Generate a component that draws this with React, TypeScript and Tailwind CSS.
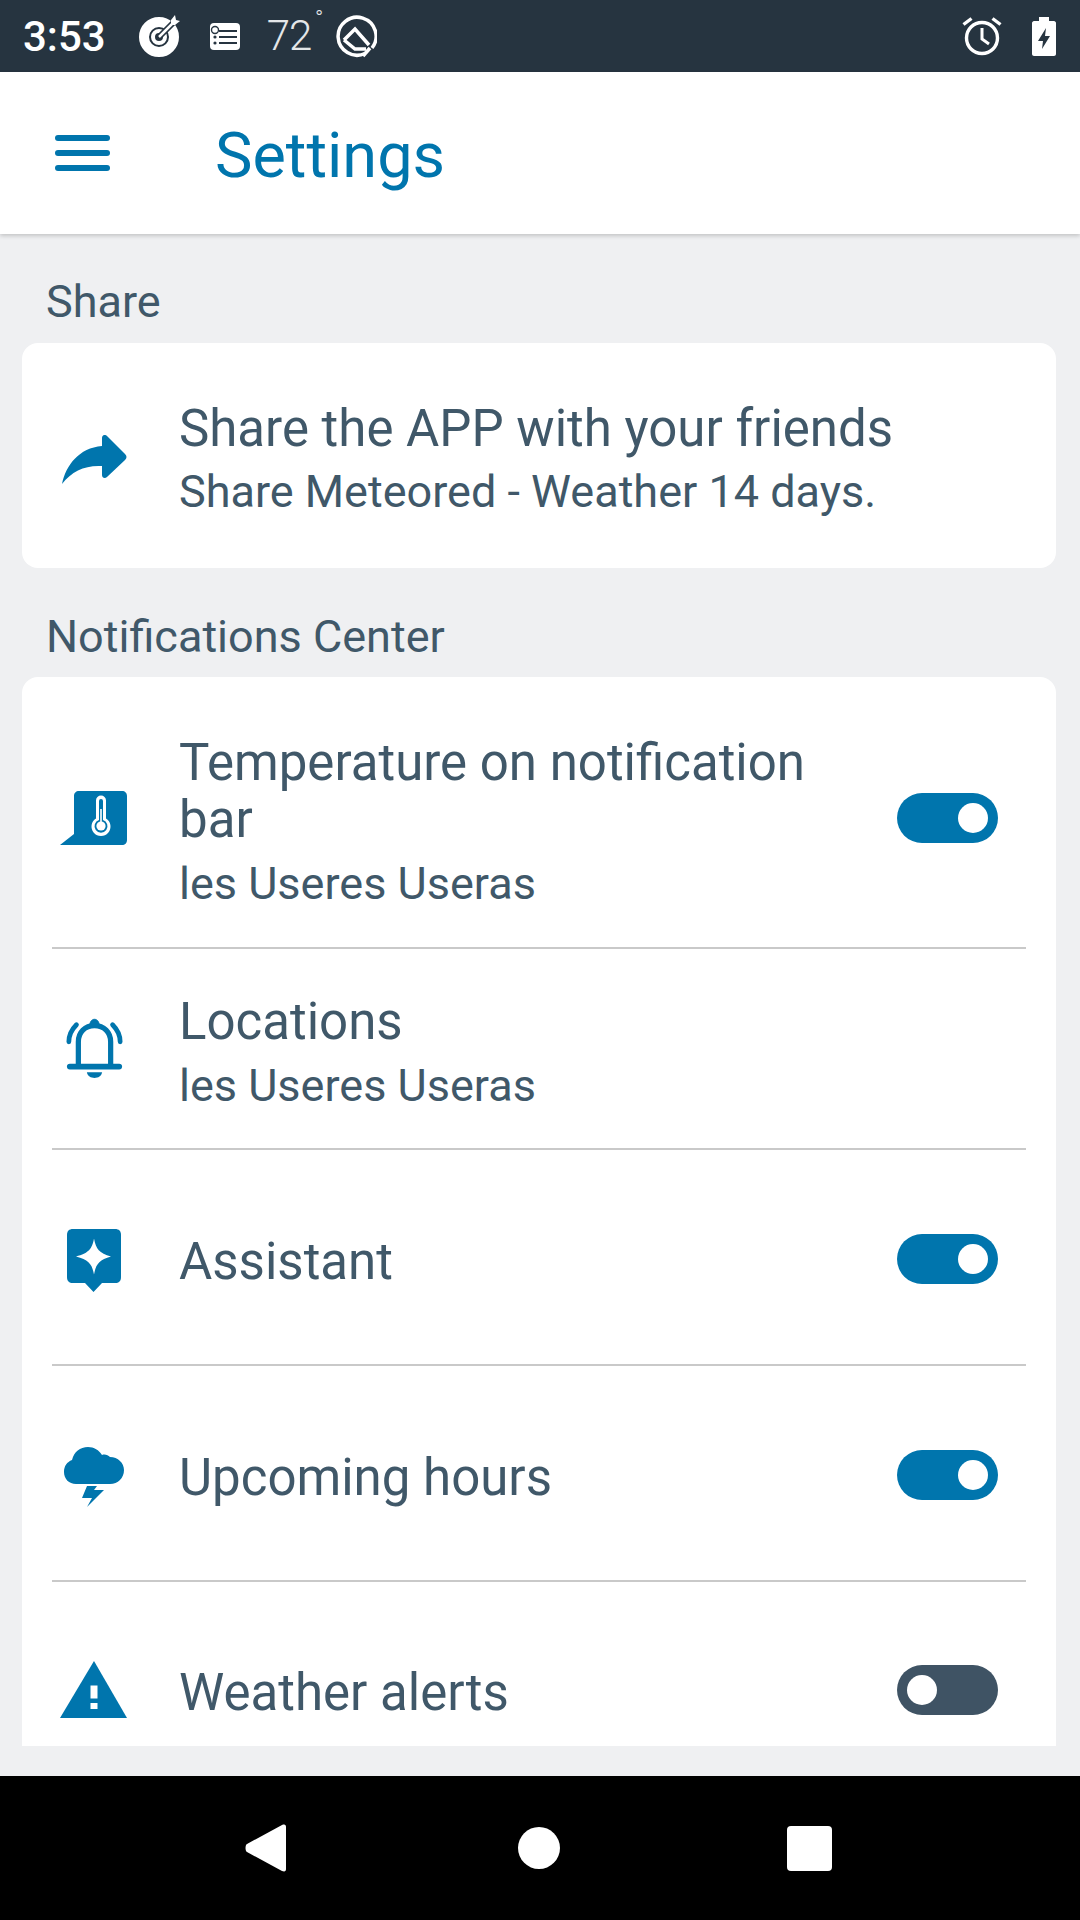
const blue = '#0075ad';

function Toggle({ on }: { on: boolean }) {
  return (
    <div className={`flex h-[50px] w-[101px] shrink-0 items-center rounded-full px-[10px] ${on ? 'justify-end bg-[#0075ad]' : 'justify-start bg-[#3f5364]'}`}>
      <div className="h-[30px] w-[30px] rounded-full bg-white" />
    </div>
  );
}

function ShareIcon() {
  return (
    <svg width="66" height="50" viewBox="0 0 66 50" fill={blue}>
      <path d="M1 49C5 30 18 13 41 11V3C41 0 44 -1 46 1L64 19C66 21 66 23 64 25L46 42C44 44 41 43 41 40V31C24 30 11 36 1 49Z" />
    </svg>
  );
}

function ThermoIcon() {
  return (
    <svg width="68" height="54" viewBox="0 0 68 54">
      <path d="M14 5C14 2 16 0 19 0H62C65 0 67 2 67 5V49C67 52 65 54 62 54H0L14 43Z" fill={blue} />
      <path d="M36 9.5A5 5 0 0 1 46 9.5V27.5A9.5 9.5 0 1 1 36 27.5Z" fill="#fff" />
      <path d="M39 10A2 2 0 0 1 43 10V29A6.5 6.5 0 1 1 39 29Z" fill={blue} />
      <path d="M40.2 18H41.8V32H40.2Z" fill="#fff" />
      <circle cx="41" cy="35" r="4.6" fill="#fff" />
    </svg>
  );
}

function BellIcon() {
  return (
    <svg width="57" height="63" viewBox="0 0 60 64" fill="none">
      <path d="M13 51V25C13 15 20 8 30 8C40 8 47 15 47 25V51" stroke={blue} strokeWidth="5.5" />
      <path d="M4 51H56" stroke={blue} strokeWidth="6" strokeLinecap="round" />
      <path d="M25 8C25 -1 35 -1 35 8Z" fill={blue} stroke={blue} strokeWidth="1" />
      <path d="M22 57H38C37 65 23 65 22 57Z" fill={blue} />
      <path d="M3 25C3 17 6 12 11 7" stroke={blue} strokeWidth="5" strokeLinecap="round" />
      <path d="M57 25C57 17 54 12 49 7" stroke={blue} strokeWidth="5" strokeLinecap="round" />
    </svg>
  );
}

function AssistantIcon() {
  return (
    <svg width="56" height="64" viewBox="0 0 56 64">
      <path d="M7 0H49C53 0 55 2 55 6V48C55 52 53 54 49 54H36L27.5 63L19 54H7C3 54 1 52 1 48V6C1 2 3 0 7 0Z" fill={blue} />
      <path d="M28 9.5C30 20 33 24 45 27.5C33 31 30 35 28 45.5C26 35 23 31 10 27.5C23 24 26 20 28 9.5Z" fill="#fff" />
    </svg>
  );
}

function StormIcon() {
  return (
    <svg width="62" height="62" viewBox="0 0 62 62" fill={blue}>
      <path d="M13 38C6 38 1 33 1 26C1 20 4 16 9 14C11 6 17 1 25 1C31 1 36 4 39 9C42 8 45 9 47 11C55 11 61 17 61 24C61 32 55 38 47 38Z" />
      <path d="M24 40H34L31 44H41L24 61L29 52H19Z" />
    </svg>
  );
}

function WarningIcon() {
  return (
    <svg width="68" height="58" viewBox="0 0 68 58">
      <path d="M34 0L67 57H0Z" fill={blue} />
      <rect x="30.5" y="24.5" width="7" height="13" fill="#fff" />
      <rect x="30.5" y="42" width="7" height="6" fill="#fff" />
    </svg>
  );
}

function StatusBar() {
  return (
    <div className="flex h-[72px] shrink-0 items-center bg-[#263440] pl-[23px] pr-[24px]">
      <span className="text-[42px] font-medium text-white">3:53</span>
      <svg className="ml-[33px]" width="42" height="42" viewBox="0 0 42 42">
        <circle cx="20" cy="22" r="15" fill="none" stroke="#fff" strokeWidth="10" />
        <circle cx="20" cy="22" r="6" fill="none" stroke="#fff" strokeWidth="4" />
        <path d="M20 22L36 6" stroke="#263440" strokeWidth="6" />
        <path d="M20 22L35 7" stroke="#fff" strokeWidth="2.5" />
        <path d="M32 5L36 0L37 5L41 6L36 10L32 10Z" fill="#fff" />
      </svg>
      <svg className="ml-[28px]" width="32" height="29" viewBox="0 0 32 29">
        <rect x="1" y="1" width="30" height="27" rx="4" fill="#fff" />
        <path d="M10 9H28M10 15H28M10 21H28" stroke="#263440" strokeWidth="2" />
        <circle cx="6" cy="8" r="3.5" fill="none" stroke="#263440" strokeWidth="1.4" />
        <circle cx="6" cy="15" r="1.6" fill="#263440" />
        <circle cx="6" cy="21" r="1.6" fill="#263440" />
      </svg>
      <span className="relative ml-[26px] text-[42px] font-light leading-none tracking-[-1px] text-[#e4e6e8]">
        72
        <span className="absolute right-[-11px] top-[-7px] text-[22px]">°</span>
      </span>
      <svg className="ml-[24px]" width="42" height="43" viewBox="0 0 42 43" fill="none">
        <path d="M30 38.5A19 19 0 1 1 37 33" stroke="#fff" strokeWidth="3.5" />
        <path d="M9 25L20 14L34 30" stroke="#fff" strokeWidth="3.5" />
        <path d="M28 41L35 33" stroke="#fff" strokeWidth="3.5" />
        <path d="M9 25L20 34H31" stroke="#fff" strokeWidth="3.5" />
      </svg>
      <div className="flex-1" />
      <svg width="40" height="40" viewBox="0 0 40 40" fill="none">
        <circle cx="20" cy="22" r="15.5" stroke="#fff" strokeWidth="3.4" />
        <path d="M20 12V23L27 28" stroke="#fff" strokeWidth="3" />
        <path d="M1.5 8.5L9.5 2.5M38.5 8.5L30.5 2.5" stroke="#fff" strokeWidth="3.4" />
      </svg>
      <svg className="ml-[30px]" width="24" height="39" viewBox="0 0 24 39">
        <path d="M7 0H17V4H22C23 4 24 5 24 6V37C24 38 23 39 22 39H2C1 39 0 38 0 37V6C0 5 1 4 2 4H7Z" fill="#fff" />
        <path d="M14 11L6 24H11L10 32L18 19H13Z" fill="#263440" />
      </svg>
    </div>
  );
}

function AppBar() {
  return (
    <header className="z-10 flex h-[162px] shrink-0 items-center bg-white pl-[55px] shadow-[0_2px_4px_rgba(0,0,0,0.18)]">
      <div className="flex w-[55px] flex-col gap-[9px]">
        <div className="h-[6px] rounded-full bg-[#0075ad]" />
        <div className="h-[6px] rounded-full bg-[#0075ad]" />
        <div className="h-[6px] rounded-full bg-[#0075ad]" />
      </div>
      <h1 className="ml-[105px] mt-[4px] text-[63px] font-normal leading-none text-[#0075ad]">Settings</h1>
    </header>
  );
}

type RowProps = {
  icon: React.ReactNode;
  title: string;
  sub?: string;
  toggle?: boolean;
  className: string;
  last?: boolean;
};

function Row({ icon, title, sub, toggle, className, last }: RowProps) {
  return (
    <div className={`mx-[30px] flex items-center pr-[28px] ${last ? '' : 'border-b-2 border-[#c9c9c9]'} ${className}`}>
      <div className="flex w-[84px] shrink-0 justify-center">{icon}</div>
      <div className={`ml-[43px] min-w-0 flex-1 pr-[60px] ${sub ? 'pt-[6px]' : 'pt-[6px]'}`}>
        <div className="text-[51px] leading-[57px] text-[#405869]">{title}</div>
        {sub && <div className="mt-[11px] text-[45px] leading-[50px] text-[#405869]">{sub}</div>}
      </div>
      {toggle !== undefined && <Toggle on={toggle} />}
    </div>
  );
}

function SectionTitle({ children, className }: { children: React.ReactNode; className: string }) {
  return <h2 className={`ml-[46px] text-[45px] font-normal leading-[48px] text-[#405869] ${className}`}>{children}</h2>;
}

export default function App() {
  return (
    <div className="flex h-[1920px] w-[1080px] flex-col overflow-hidden bg-[#eff0f2] font-['Roboto',sans-serif]">
      <StatusBar />
      <AppBar />
      <main className="min-h-0 flex-1 overflow-hidden">
        <SectionTitle className="mt-[44px]">Share</SectionTitle>
        <section className="ml-[22px] mr-[24px] mt-[17px] flex h-[225px] items-center rounded-[16px] bg-white px-[30px]">
          <div className="mt-[8px] flex w-[84px] shrink-0 justify-center">
            <ShareIcon />
          </div>
          <div className="ml-[43px] pt-[6px]">
            <div className="text-[51px] leading-[57px] text-[#405869]">Share the APP with your friends</div>
            <div className="mt-[10px] text-[45px] leading-[50px] text-[#405869]">Share Meteored - Weather 14 days.</div>
          </div>
        </section>
        <SectionTitle className="mt-[45px]">Notifications Center</SectionTitle>
        <section className="ml-[22px] mr-[24px] mt-[16px] h-[1069px] overflow-hidden rounded-t-[16px] bg-white">
          <Row className="h-[272px] pt-[12px]" icon={<ThermoIcon />} title="Temperature on notification bar" sub="les Useres Useras" toggle={true} />
          <Row className="h-[201px]" icon={<BellIcon />} title="Locations" sub="les Useres Useras" />
          <Row className="h-[216px] pt-[3px]" icon={<div className="mt-[5px]"><AssistantIcon /></div>} title="Assistant" toggle={true} />
          <Row className="h-[216px] pt-[3px]" icon={<div className="mt-[5px]"><StormIcon /></div>} title="Upcoming hours" toggle={true} />
          <Row className="h-[215px]" icon={<WarningIcon />} title="Weather alerts" toggle={false} last />
        </section>
      </main>
      <nav className="flex h-[144px] shrink-0 items-center bg-black">
        <svg className="ml-[245px]" width="42" height="48" viewBox="0 0 42 48" fill="#fff">
          <path d="M2 20L37 1C40 0 41 1 41 3V45C41 47 40 48 37 47L2 28C0 27 0 21 2 20Z" />
        </svg>
        <div className="ml-[231px] h-[42px] w-[42px] rounded-full bg-white" />
        <div className="ml-[227px] h-[45px] w-[45px] rounded-[4px] bg-white" />
      </nav>
    </div>
  );
}
